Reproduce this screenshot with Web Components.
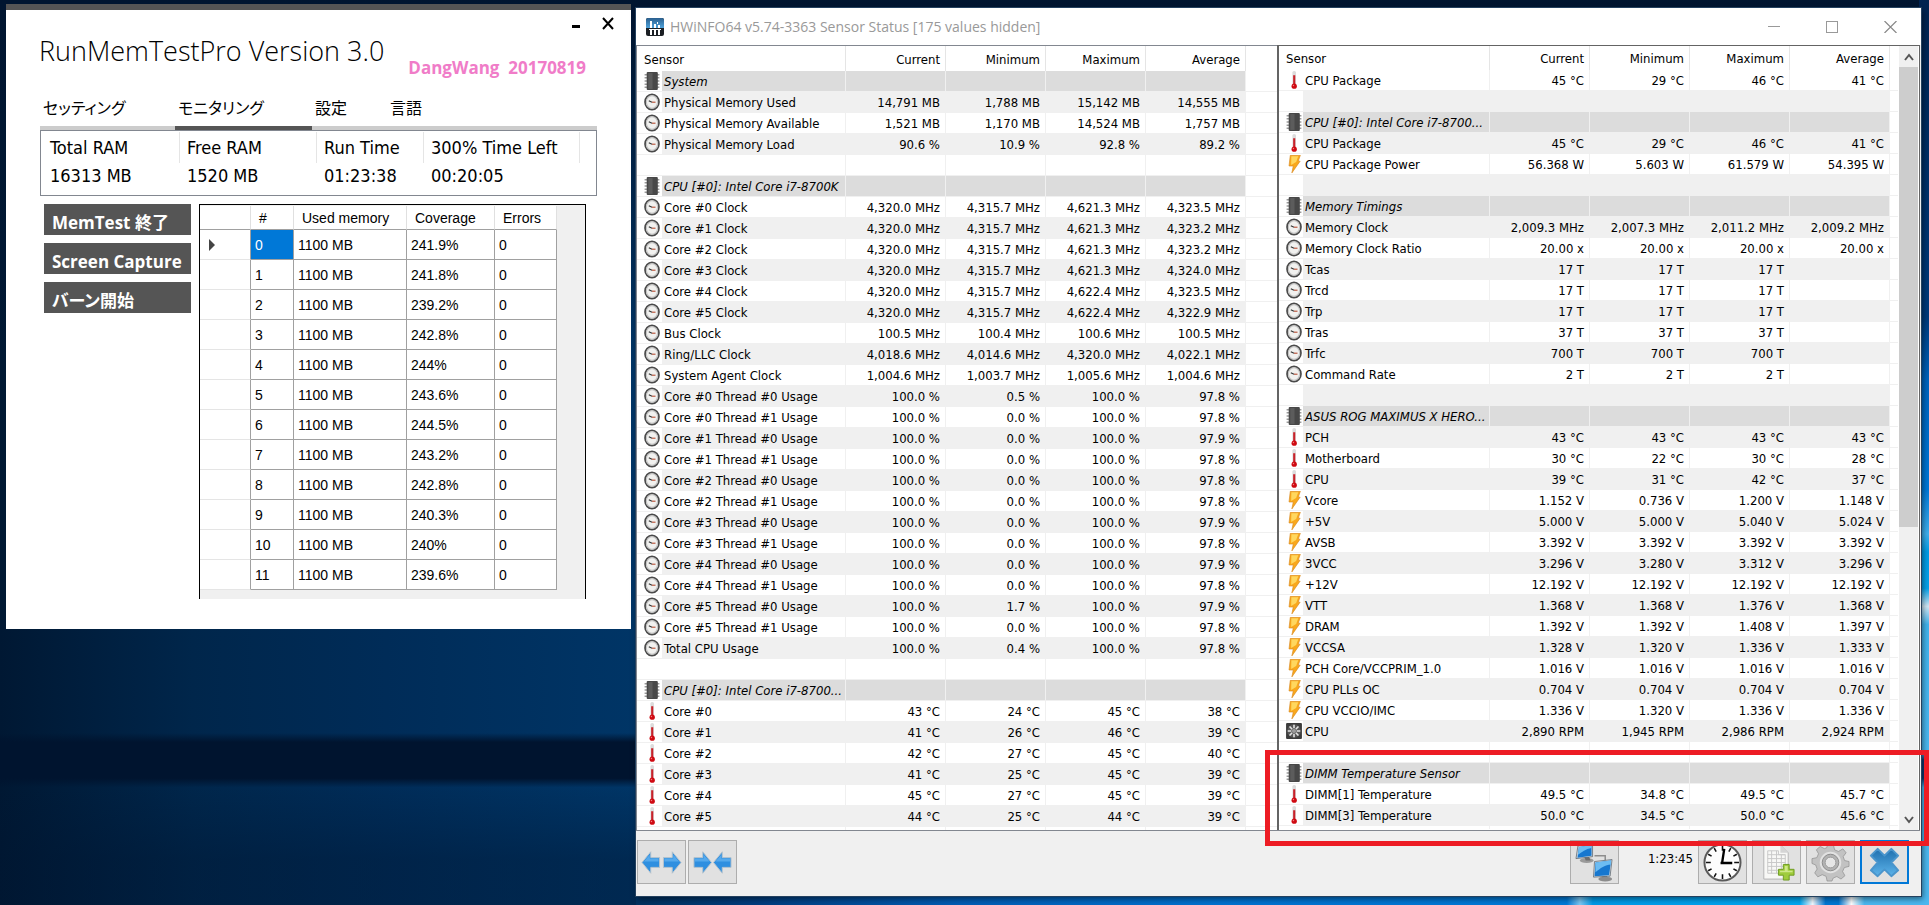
<!DOCTYPE html>
<html lang="ja">
<head>
<meta charset="utf-8">
<title>Desktop</title>
<style>
  body {
    margin: 0;
    font-family: "DejaVu Sans Condensed", "DejaVu Sans", "Noto Sans CJK JP", sans-serif;
    color: #000;
  }
</style>
</head>
<body>
<desk-top>
  <memtest-window slot="left"></memtest-window>
  <hwinfo-window slot="right"></hwinfo-window>
</desk-top>

<script>
const ICONS = {
  chip: `<svg viewBox="0 0 15 17"><path d="M.5 2.500h14M.5 5.500h14M.5 8.500h14M.5 11.500h14M.5 14.500h14" stroke="#9a9a9a" stroke-width="1.400"/><rect x="2.500" y="0" width="10.500" height="17" rx="1" fill="#484848"/><rect x="4" y="1" width="4" height="15" fill="#5c5c5c"/></svg>`,
  clock: `<svg viewBox="0 0 15 17"><ellipse cx="7.500" cy="8.500" rx="6.600" ry="7.200" fill="#f1f1ef" stroke="#4a4a4a" stroke-width="1.600"/><ellipse cx="7.500" cy="8.500" rx="5.300" ry="5.900" fill="none" stroke="#c4c4c4"/><path d="M4.500 7.300l3 1.400" stroke="#333" stroke-width="1.100"/><path d="M7.500 8.700h3.300" stroke="#b9553c" stroke-width="1.100"/></svg>`,
  temp: `<svg viewBox="0 0 15 17"><rect x="6" y="0" width="3.400" height="14" rx="1.500" fill="#dcdcdc"/><path d="M7.700 4v9" stroke="#c8222a" stroke-width="2"/><circle cx="7.700" cy="14.300" r="2.500" fill="#cf0a12"/><circle cx="7" cy="13.700" r=".7" fill="#f08080"/></svg>`,
  bolt: `<svg viewBox="0 0 15 17"><path d="M4 .3h9.500l-2 5.500h1.800L5.500 16.900l1.300-6.500H2.800z" fill="#f9a81c" stroke="#d98a22" stroke-width=".6"/><path d="M5 1.200h6.500L9.500 6.500 4.800 9.500z" fill="#ffd75e"/></svg>`,
  fan: `<svg viewBox="0 0 15 17"><rect x="0" y="1" width="15" height="15" rx="1" fill="#3c3c3c"/><circle cx="7.500" cy="8.500" r="6.400" fill="#585858"/><g stroke="#e4e4e4" stroke-width="1.500"><path d="M7.500 2.600v3.400M7.500 11v3.400M1.600 8.500h3.400M10 8.500h3.400M3.300 4.300l2.500 2.500M9.200 10.200l2.500 2.500M11.700 4.300L9.200 6.800M5.800 10.200l-2.500 2.500"/></g><circle cx="7.500" cy="8.500" r="2" fill="#9c9c9c"/></svg>`,
  app: `<svg viewBox="0 0 18 18"><defs><linearGradient id="a" x2="0" y2="1"><stop stop-color="#2b5f8e"/><stop offset="1" stop-color="#4fa3dc"/></linearGradient></defs><rect width="18" height="18" rx="2" fill="#1b1f24"/><path d="M0 2a2 2 0 0 1 2-2h14a2 2 0 0 1 2 2v8H0z" fill="url(#a)"/><path d="M4 3h2v7H4zM8 6h2v4H8zM12 7h2v3h-2zM11 4h1v2h-1z" fill="#fff"/><path d="M3 11h12v1H3zM4 12h2v5H4zM8 12h2v5H8zM12 12h2v5h-2z" fill="#fff"/></svg>`,
  widen: `<svg viewBox="0 0 42 28"><path d="M1 14L10 3v6h9v10h-9v6zM41 14L32 3v6h-9v10h9v6z" fill="#2f8fe0" stroke="#b7c3cd"/><path d="M3 13L9 6v4h9v3zM39 13L33 6v4h-9v3z" fill="#55a9ec"/></svg>`,
  narrow: `<svg viewBox="0 0 42 28"><path d="M20 14L11 3v6H2v10h9v6zM22 14l9-11v6h9v10h-9v6z" fill="#2f8fe0" stroke="#b7c3cd"/><path d="M18 13L12 6v4H3v3zM24 13l6-7v4h9v3z" fill="#55a9ec"/></svg>`,
  network: `<svg viewBox="0 0 40 40"><path d="M20 13h11v8" fill="none" stroke="#8d8d8d" stroke-width="1.500"/><ellipse cx="12" cy="18" rx="7" ry="2.500" fill="#9a9a9a"/><path d="M9 13h5l2 5h-5z" fill="#6d6d6d"/><path d="M3 3l15-2v13L1 16z" fill="#d7dde2" stroke="#4a5660" stroke-width=".7"/><path d="M4 4l13-2v11L2.500 15z" fill="#1677cf"/><path d="M4 4l13-2v3C11 6 7 9 3 12z" fill="#6cbcf2"/><path d="M27 32h5l2 5h-6z" fill="#6d6d6d"/><ellipse cx="31" cy="37" rx="7" ry="2.500" fill="#8c8c8c"/><path d="M20 19l18-2-2 17-17 1z" fill="#d7dde2" stroke="#4a5660" stroke-width=".7"/><path d="M21 20l16-2-2 15-15 1z" fill="#1677cf"/><path d="M21 20l16-2v4c-6 0-11 4-16 8z" fill="#6cbcf2"/></svg>`,
  time: `<svg viewBox="0 0 40 40"><circle cx="20" cy="20" r="18.500" fill="#fdfdfd" stroke="#5a5a5a" stroke-width="2"/><path d="M20 3v5M20 32v5M3 20h5M32 20h5M11.500 5.300l2 3.500M28.500 5.300l-2 3.500M11.500 34.700l2-3.500M28.500 34.700l-2-3.500M5.300 11.500l3.500 2M5.300 28.500l3.500-2M34.700 11.500l-3.500 2M34.700 28.500l-3.500-2" stroke="#111" stroke-width="1.600"/><path d="M19.500 21l2.300-15M18 20.500h12" stroke="#000" stroke-width="2.400"/></svg>`,
  log: `<svg viewBox="0 0 40 40"><path d="M7 2h17l8 8v27H7z" fill="#f8f8f6" stroke="#b4b4b4"/><path d="M24 2v8h8z" fill="#d5d5d5"/><path d="M11 8h11v4h7v19H11zM11 12h18M11 16h18M11 20h18M11 24h18M11 28h18M15 8v23M20 8v23M25 12v19" fill="none" stroke="#c9c9c9"/><path d="M27 22h6v5h5v6h-5v5h-6v-5h-5v-6h5z" fill="#9fcc3c" stroke="#6f9c22"/><path d="M28.500 23.500h3v5h5v1.500h-13v-1.500h5z" fill="#cfe88a"/></svg>`,
  gear: `<svg viewBox="0 0 40 40"><g fill="#c2c2c2" stroke="#8c8c8c" stroke-width=".7"><path d="M17 2h6l1.200 5 4 1.700L32.700 6 36 10l-3 4 1.500 4 4.500 1v5l-4.800 1.200-1.800 4 2.400 4.300-4 3.500-4.300-2.600-3.700 1.500L21.500 39h-5l-1-4.800-4-1.700-4.500 2.200-3.200-4 2.500-4L4.800 22.500 1 21v-5l5-1 1.700-4L5.500 7l4-3.500 4.200 2.300L16 5z"/></g><circle cx="20" cy="20" r="11" fill="#e2e2e2"/><circle cx="20" cy="20" r="8.500" fill="#b3b3b3" stroke="#8b8b8b"/><circle cx="20" cy="20" r="5.500" fill="#e6e6e6" stroke="#9b9b9b"/></svg>`,
  cross: `<svg viewBox="0 0 40 40"><defs><linearGradient id="c" x2="0" y2="1"><stop stop-color="#1f6fae"/><stop offset="1" stop-color="#5db4ea"/></linearGradient></defs><path d="M13 6l7 7 7-7 7 7-7 7 7 8-7 6-7-7-7 7-7-6 7-8-7-7z" fill="url(#c)" stroke="#4a95cc" stroke-width="2" stroke-linejoin="round"/></svg>`
};

// icon|name|current|minimum|maximum|average, an empty string is a spacer row
const usage = [0, 1, 2, 3, 4, 5].flatMap(n => [0, 1].map(t => {
  const min = n === 0 && t === 0 ? '0.5' : n === 5 && t === 0 ? '1.7' : '0.0';
  const avg = ['97.8', '97.8', '97.9', '97.8', '97.8', '97.8', '97.9', '97.8', '97.9', '97.8', '97.9', '97.8'][n * 2 + t];
  return `clock|Core #${n} Thread #${t} Usage|100.0 %|${min} %|100.0 %|${avg} %`;
}));

const LEFT = [
  'chip|System',
  'clock|Physical Memory Used|14,791 MB|1,788 MB|15,142 MB|14,555 MB',
  'clock|Physical Memory Available|1,521 MB|1,170 MB|14,524 MB|1,757 MB',
  'clock|Physical Memory Load|90.6 %|10.9 %|92.8 %|89.2 %',
  '',
  'chip|CPU [#0]: Intel Core i7-8700K',
  'clock|Core #0 Clock|4,320.0 MHz|4,315.7 MHz|4,621.3 MHz|4,323.5 MHz',
  'clock|Core #1 Clock|4,320.0 MHz|4,315.7 MHz|4,621.3 MHz|4,323.2 MHz',
  'clock|Core #2 Clock|4,320.0 MHz|4,315.7 MHz|4,621.3 MHz|4,323.2 MHz',
  'clock|Core #3 Clock|4,320.0 MHz|4,315.7 MHz|4,621.3 MHz|4,324.0 MHz',
  'clock|Core #4 Clock|4,320.0 MHz|4,315.7 MHz|4,622.4 MHz|4,323.5 MHz',
  'clock|Core #5 Clock|4,320.0 MHz|4,315.7 MHz|4,622.4 MHz|4,322.9 MHz',
  'clock|Bus Clock|100.5 MHz|100.4 MHz|100.6 MHz|100.5 MHz',
  'clock|Ring/LLC Clock|4,018.6 MHz|4,014.6 MHz|4,320.0 MHz|4,022.1 MHz',
  'clock|System Agent Clock|1,004.6 MHz|1,003.7 MHz|1,005.6 MHz|1,004.6 MHz',
  ...usage,
  'clock|Total CPU Usage|100.0 %|0.4 %|100.0 %|97.8 %',
  '',
  'chip|CPU [#0]: Intel Core i7-8700...',
  'temp|Core #0|43 °C|24 °C|45 °C|38 °C',
  'temp|Core #1|41 °C|26 °C|46 °C|39 °C',
  'temp|Core #2|42 °C|27 °C|45 °C|40 °C',
  'temp|Core #3|41 °C|25 °C|45 °C|39 °C',
  'temp|Core #4|45 °C|27 °C|45 °C|39 °C',
  'temp|Core #5|44 °C|25 °C|44 °C|39 °C'
];

const RIGHT = [
  'temp|CPU Package|45 °C|29 °C|46 °C|41 °C',
  '',
  'chip|CPU [#0]: Intel Core i7-8700...',
  'temp|CPU Package|45 °C|29 °C|46 °C|41 °C',
  'bolt|CPU Package Power|56.368 W|5.603 W|61.579 W|54.395 W',
  '',
  'chip|Memory Timings',
  'clock|Memory Clock|2,009.3 MHz|2,007.3 MHz|2,011.2 MHz|2,009.2 MHz',
  'clock|Memory Clock Ratio|20.00 x|20.00 x|20.00 x|20.00 x',
  'clock|Tcas|17 T|17 T|17 T|',
  'clock|Trcd|17 T|17 T|17 T|',
  'clock|Trp|17 T|17 T|17 T|',
  'clock|Tras|37 T|37 T|37 T|',
  'clock|Trfc|700 T|700 T|700 T|',
  'clock|Command Rate|2 T|2 T|2 T|',
  '',
  'chip|ASUS ROG MAXIMUS X HERO...',
  'temp|PCH|43 °C|43 °C|43 °C|43 °C',
  'temp|Motherboard|30 °C|22 °C|30 °C|28 °C',
  'temp|CPU|39 °C|31 °C|42 °C|37 °C',
  'bolt|Vcore|1.152 V|0.736 V|1.200 V|1.148 V',
  'bolt|+5V|5.000 V|5.000 V|5.040 V|5.024 V',
  'bolt|AVSB|3.392 V|3.392 V|3.392 V|3.392 V',
  'bolt|3VCC|3.296 V|3.280 V|3.312 V|3.296 V',
  'bolt|+12V|12.192 V|12.192 V|12.192 V|12.192 V',
  'bolt|VTT|1.368 V|1.368 V|1.376 V|1.368 V',
  'bolt|DRAM|1.392 V|1.392 V|1.408 V|1.397 V',
  'bolt|VCCSA|1.328 V|1.320 V|1.336 V|1.333 V',
  'bolt|PCH Core/VCCPRIM_1.0|1.016 V|1.016 V|1.016 V|1.016 V',
  'bolt|CPU PLLs OC|0.704 V|0.704 V|0.704 V|0.704 V',
  'bolt|CPU VCCIO/IMC|1.336 V|1.320 V|1.336 V|1.336 V',
  'fan|CPU|2,890 RPM|1,945 RPM|2,986 RPM|2,924 RPM',
  '',
  'chip|DIMM Temperature Sensor',
  'temp|DIMM[1] Temperature|49.5 °C|34.8 °C|49.5 °C|45.7 °C',
  'temp|DIMM[3] Temperature|50.0 °C|34.5 °C|50.0 °C|45.6 °C'
];

class DeskTop extends HTMLElement {
  constructor() {
    super();
    this.attachShadow({ mode: 'open' });
  }

  connectedCallback() {
    this.shadowRoot.innerHTML = `
      <style>
        :host {
          display: grid;
          grid-template-columns: minmax(0, 625fr) minmax(0, 1285fr);
          gap: 5px;
          align-items: start;
          box-sizing: border-box;
          min-height: 100vh;
          padding: 4px 8px 9px 6px;
          background:
            linear-gradient(180deg, #002350, #003a7c 35%, #0064be 42%, #0078d8 54%, #3fb0ee 59%, #009ce6 61%, #06a2ea 65%, #d2e8f6 67%, #42b4ee 69%, #4bb8f0 83%, #0b3c72 84%, #0b3c72 86%, #4bb8f0 87%) right top / 10px 100% no-repeat,
            linear-gradient(90deg, #00305e, #003e80 10%, #005cb4 25%, #0072d0 45%, #007ad8 72%, #7cc8f4 73%, #009ae8 74%, #00a8f2 90%, #f4faff 91%, #0078d4 92%, #0078d4 93%, #ffffff 94%, #4bb8f0 95%) right bottom / calc(100% - 636px) 10px no-repeat,
            linear-gradient(180deg, transparent 81%, #00142f 82%, #00142f 86%, transparent 87%) left top / 640px 100% no-repeat,
            linear-gradient(180deg, #001530 0, #00153000 40%, #00153000 87%, #00153060 95%),
            linear-gradient(90deg, #001833, #00264b 10%, #002c58 20%, #003566 33%, #002a55);
        }
        ::slotted([slot="right"]) {
          margin-top: 4px;
        }
      </style>
      <slot name="left"></slot>
      <slot name="right"></slot>
    `;
  }
}

customElements.define('desk-top', DeskTop);

class MemtestWindow extends HTMLElement {
  constructor() {
    super();
    this.attachShadow({ mode: 'open' });
  }

  connectedCallback() {
    this.shadowRoot.innerHTML = `
      <style>
        :host {
          display: block;
          background: #fff;
          border-top: 6px solid #555;
        }
        button {
          border: none;
          background: none;
          padding: 0;
          font: inherit;
          color: inherit;
        }
        svg { display: block; }
        .controls {
          display: flex;
          justify-content: flex-end;
          align-items: flex-end;
          gap: 22px;
          height: 20px;
          margin-bottom: 3px;
          padding-right: 17px;
        }
        .content {
          padding: 0 34px 30px;
        }
        header {
          display: flex;
          gap: 24px;
          margin-left: -1px;
          font-family: "Open Sans", sans-serif;
          white-space: nowrap;
        }
        h1 {
          margin: 0;
          font-size: 27px;
          line-height: 36px;
          font-weight: 300;
        }
        .author {
          margin: 23px 0 0;
          font-size: 17px;
          line-height: 24px;
          font-weight: bold;
          color: #f07cc8;
          white-space: pre;
        }
        nav {
          display: grid;
          grid-template-columns: 135px 137px 75px 1fr;
        }
        nav button {
          box-sizing: border-box;
          height: 50px;
          padding: 8px 0 0 3px;
          border-bottom: 4px solid #ccc;
          font: 16px "Noto Sans CJK JP", sans-serif;
          font-feature-settings: "palt";
          text-align: left;
        }
        nav button[aria-selected="true"] {
          border-color: #555;
        }
        table {
          border-collapse: separate;
          border-spacing: 0;
          table-layout: fixed;
        }
        .summary {
          border: 1px solid #828790;
          padding: 1px 0 8px;
        }
        .summary table { width: 100%; }
        .summary th, .summary td {
          padding: 0 0 0 7px;
          height: 24px;
          font-size: 18px;
          font-weight: normal;
          text-align: left;
          white-space: nowrap;
        }
        .summary th {
          height: 31px;
          border-right: 1px solid #e5e5e5;
        }
        .summary th:first-child, .summary td:first-child { padding-left: 9px; }
        .summary th:last-child { border: none; }
        .body {
          display: flex;
          align-items: flex-start;
          gap: 8px;
          padding: 8px 11px 0 4px;
        }
        .actions {
          display: flex;
          flex-direction: column;
          gap: 8px;
          width: 147px;
        }
        .actions button {
          height: 31px;
          padding: 7px 0 0 8px;
          background: #555;
          color: #fff;
          font: bold 17px/24px "Open Sans", "Noto Sans CJK JP", sans-serif;
          font-feature-settings: "palt";
          text-align: left;
          white-space: nowrap;
        }
        .grid {
          flex: 1;
          border: 1px solid #000;
          border-bottom: none;
          padding: 1px 0 9px;
          background: #f0f0f0;
          font-family: "Liberation Sans", sans-serif;
          font-size: 14px;
        }
        .grid th, .grid td {
          box-sizing: border-box;
          height: 30px;
          padding: 0 0 0 4px;
          background: #fff;
          border: 0 solid #a0a0a0;
          border-width: 0 1px 1px 0;
          font-weight: normal;
          text-align: left;
          white-space: nowrap;
        }
        .grid thead th {
          height: 24px;
          padding-left: 8px;
          border-right-color: #e0e0e0;
        }
        .grid tbody th {
          padding-left: 8px;
          border-bottom-color: #e5e5e5;
        }
        .grid td.selected {
          background: #0078d7;
          color: #fff;
        }
      </style>
      <div class="controls">
        <button aria-label="Minimize"><svg width="8" height="6"><rect width="8" height="3" y="1"/></svg></button>
        <button aria-label="Close"><svg width="12" height="14"><path d="M1 2l10 11M11 2L1 13" stroke="#000" stroke-width="2"/></svg></button>
      </div>
      <div class="content">
        <header>
          <h1>RunMemTestPro Version 3.0</h1>
          <p class="author">DangWang  20170819</p>
        </header>
        <nav role="tablist">
          <button role="tab">セッティング</button>
          <button role="tab" aria-selected="true">モニタリング</button>
          <button role="tab">設定</button>
          <button role="tab">言語</button>
        </nav>
        <div class="summary">
          <table>
            <colgroup><col style="width:139px"><col style="width:137px"><col style="width:107px"><col style="width:156px"><col></colgroup>
            <thead><tr><th>Total RAM</th><th>Free RAM</th><th>Run Time</th><th>300% Time Left</th><th></th></tr></thead>
            <tbody><tr><td>16313 MB</td><td>1520 MB</td><td>01:23:38</td><td>00:20:05</td><td></td></tr></tbody>
          </table>
        </div>
        <div class="body">
          <div class="actions">
            <button>MemTest 終了</button>
            <button>Screen Capture</button>
            <button>バーン開始</button>
          </div>
          <div class="grid">
            <table style="width:357px">
              <colgroup><col style="width:51px"><col style="width:43px"><col style="width:113px"><col style="width:88px"><col style="width:62px"></colgroup>
              <thead><tr><th></th><th>#</th><th>Used memory</th><th>Coverage</th><th>Errors</th></tr></thead>
              <tbody></tbody>
            </table>
          </div>
        </div>
      </div>
    `;

    const coverage = [241.9, 241.8, 239.2, 242.8, 244, 243.6, 244.5, 243.2, 242.8, 240.3, 240, 239.6];
    const arrow = '<svg width="8" height="12"><path d="M1 0l6 6-6 6z" fill="#444"/></svg>';
    this.shadowRoot.querySelector('.grid tbody').innerHTML = coverage.map((c, i) => `
      <tr><th>${i === 0 ? arrow : ''}</th><td class="${i === 0 ? 'selected' : ''}">${i}</td><td>1100 MB</td><td>${c}%</td><td>0</td></tr>
    `).join('');
  }
}

customElements.define('memtest-window', MemtestWindow);

class SensorList extends HTMLElement {
  constructor() {
    super();
    this.attachShadow({ mode: 'open' });
  }

  connectedCallback() {
    const rows = this.getAttribute('side') === 'right' ? RIGHT : LEFT;

    this.shadowRoot.innerHTML = `
      <style>
        :host {
          display: block;
          min-width: 0;
        }
        table {
          width: 100%;
          border-collapse: separate;
          border-spacing: 0;
          table-layout: fixed;
          font-size: 13px;
          line-height: 16px;
        }
        .icon { width: var(--icon-width, 25px); }
        .name { width: var(--name-width, 184px); }
        .value { width: 100px; }
        th, td {
          box-sizing: border-box;
          height: 21px;
          padding: 2px 5px 0 2px;
          border: 0 solid #f0f0f0;
          border-width: 0 1px 1px 0;
          font-weight: normal;
          text-align: right;
          white-space: nowrap;
        }
        thead th {
          height: var(--head-height, 25px);
          border-color: #e5e5e5;
          border-bottom: none;
        }
        th:first-child { padding-left: 7px; }
        td:last-child, thead th:last-child { border-right: none; }
        .pic {
          padding: 0 0 0 7px;
          border-right: none;
          background: #fff;
        }
        .pic svg {
          display: block;
          width: 16px;
          height: 18px;
        }
        td.label, th.label { text-align: left; }
        .odd td:not(.pic):not(:last-child) { background: #f0f0f0; }
        .group td:not(.pic):not(:last-child) { background: #dcdcdc; }
        .group .label { font-style: oblique; }
        .tail td { height: 3px; border-bottom: none; padding: 0; }
      </style>
      <table>
        <colgroup><col class="icon"><col class="name"><col class="value"><col class="value"><col class="value"><col class="value"><col></colgroup>
        <thead>
          <tr><th class="label" colspan="2">Sensor</th><th>Current</th><th>Minimum</th><th>Maximum</th><th>Average</th><th></th></tr>
        </thead>
        <tbody>
          ${rows.map((row, i) => this.row(row, i)).join('')}
          <tr class="tail"><td class="pic"></td><td></td><td></td><td></td><td></td><td></td><td></td></tr>
        </tbody>
      </table>
    `;
  }

  row(row, index) {
    const [icon, name = '', ...values] = row.split('|');
    const kind = icon === 'chip' ? 'group' : index % 2 ? 'odd' : '';
    const cells = [0, 1, 2, 3].map(n => `<td>${values[n] || ''}</td>`).join('');
    return `<tr class="${kind}"><td class="pic">${ICONS[icon] || ''}</td><td class="label">${name}</td>${cells}<td></td></tr>`;
  }
}

customElements.define('sensor-list', SensorList);

class ToolButton extends HTMLElement {
  constructor() {
    super();
    this.attachShadow({ mode: 'open' });
  }

  connectedCallback() {
    this.shadowRoot.innerHTML = `
      <style>
        :host { display: block; }
        button {
          display: flex;
          justify-content: center;
          align-items: center;
          width: 49px;
          height: 44px;
          padding: 0;
          border: 1px solid #adadad;
          background: #e1e1e1;
        }
        :host([focused]) button { border: 2px solid #0078d7; }
        svg { display: block; width: 41px; height: 39px; }
      </style>
      <button aria-label="${this.getAttribute('label')}">${ICONS[this.getAttribute('icon')]}</button>
    `;
  }
}

customElements.define('tool-button', ToolButton);

class HwinfoWindow extends HTMLElement {
  constructor() {
    super();
    this.attachShadow({ mode: 'open' });
  }

  connectedCallback() {
    this.shadowRoot.innerHTML = `
      <style>
        :host {
          display: block;
          position: relative;
          background: #f0f0f0;
          box-shadow: 0 0 0 1px #24415f, 2px 3px 6px rgba(0, 0, 0, .5);
        }
        svg { display: block; }
        header {
          display: flex;
          align-items: center;
          height: 37px;
          padding: 0 24px 0 10px;
          background: #fff;
          color: #999;
        }
        h1 {
          flex: 1;
          margin: 0 0 0 6px;
          font: 14px/20px "Open Sans", sans-serif;
        }
        header button, .scroll button {
          border: none;
          background: none;
          padding: 0;
        }
        header button { margin-left: 46px; }
        .panels {
          display: grid;
          grid-template-columns: minmax(0, 641fr) minmax(0, 643fr);
          background: #fff;
          border-bottom: 1px solid #828790;
          margin-right: 1px;
        }
        .left {
          border: 1px solid #828790;
          border-width: 1px 0 0 1px;
        }
        .right {
          --icon-width: 24px;
          --name-width: 187px;
          --head-height: 24px;
          display: flex;
          border: 1px solid #646464;
          border-left-width: 2px;
          border-bottom: none;
        }
        .right sensor-list { flex: 1; }
        .scroll {
          display: flex;
          flex-direction: column;
          width: 19px;
          margin: 0 1px;
          background: #f0f0f0;
        }
        .scroll button {
          display: flex;
          justify-content: center;
          align-items: center;
          height: 21px;
        }
        .track { flex: 1; }
        .thumb { height: 62%; background: #cdcdcd; }
        footer {
          display: flex;
          align-items: center;
          gap: 5px;
          padding: 9px 12px 12px 1px;
        }
        .pair {
          display: flex;
          gap: 2px;
        }
        .timer {
          margin: 0 0 6px 24px;
          font-size: 13px;
          line-height: 16px;
        }
        .space { flex: 1; }
        .marker {
          position: absolute;
          right: -8px;
          bottom: 50px;
          box-sizing: border-box;
          width: calc(50% + 22px);
          height: 96px;
          border: 5px solid #ed1c24;
          pointer-events: none;
        }
      </style>
      <header>
        <svg width="18" height="18">${ICONS.app}</svg>
        <h1>HWiNFO64 v5.74-3363 Sensor Status [175 values hidden]</h1>
        <button aria-label="Minimize"><svg width="12" height="12"><path d="M0 5.500h12" stroke="#999"/></svg></button>
        <button aria-label="Maximize"><svg width="12" height="12"><rect x=".5" y=".5" width="11" height="11" fill="none" stroke="#999"/></svg></button>
        <button aria-label="Close"><svg width="13" height="12"><path d="M.5 0l12 12M12.500 0l-12 12" stroke="#888" stroke-width="1.200"/></svg></button>
      </header>
      <div class="panels">
        <div class="left"><sensor-list side="left"></sensor-list></div>
        <div class="right">
          <sensor-list side="right"></sensor-list>
          <div class="scroll">
            <button aria-label="Scroll up"><svg width="10" height="8"><path d="M1 7l4-5 4 5" fill="none" stroke="#555" stroke-width="2"/></svg></button>
            <div class="track"><div class="thumb"></div></div>
            <button aria-label="Scroll down"><svg width="10" height="8"><path d="M1 1l4 5 4-5" fill="none" stroke="#555" stroke-width="2"/></svg></button>
          </div>
        </div>
      </div>
      <footer>
        <div class="pair">
          <tool-button icon="widen" label="Expand columns"></tool-button>
          <tool-button icon="narrow" label="Shrink columns"></tool-button>
        </div>
        <span class="space"></span>
        <tool-button icon="network" label="Remote monitoring"></tool-button>
        <span class="timer">1:23:45</span>
        <tool-button icon="time" label="Reset clock"></tool-button>
        <tool-button icon="log" label="Start logging"></tool-button>
        <tool-button icon="gear" label="Settings"></tool-button>
        <tool-button icon="cross" label="Close" focused></tool-button>
      </footer>
      <div class="marker"></div>
    `;
  }
}

customElements.define('hwinfo-window', HwinfoWindow);
</script>
</body>
</html>
